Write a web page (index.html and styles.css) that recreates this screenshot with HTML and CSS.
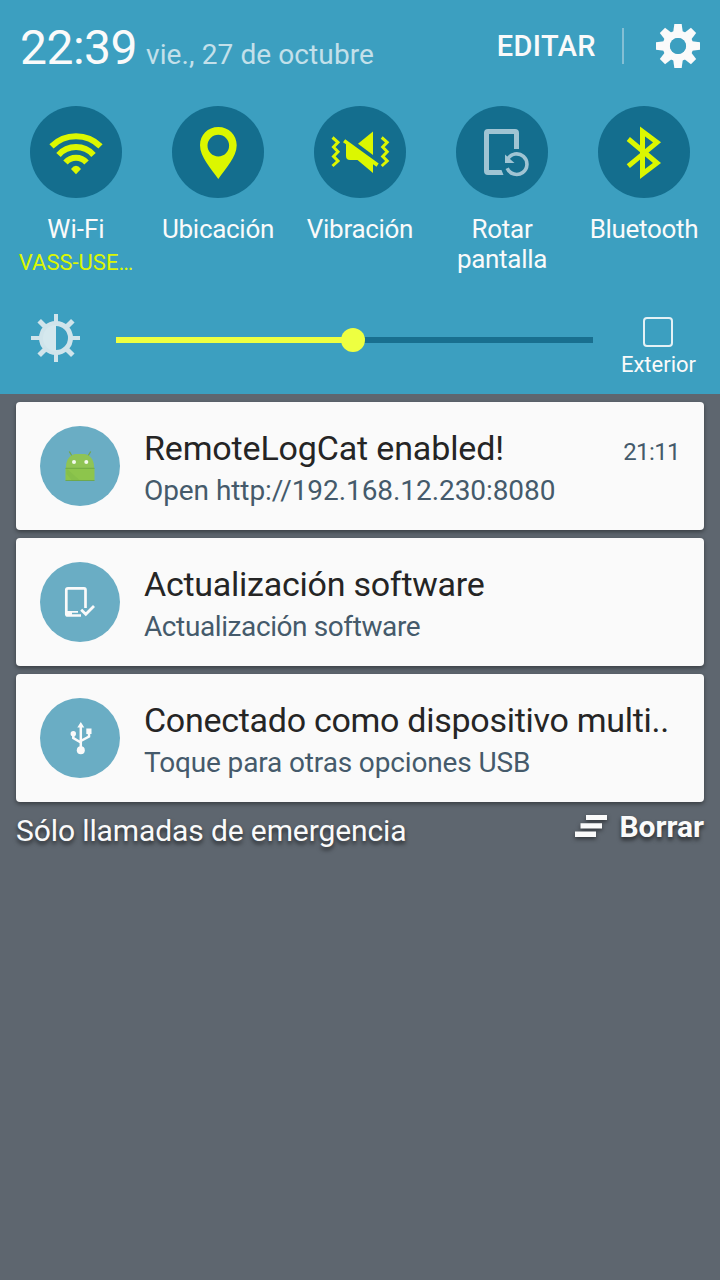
FILE: index.html
```html
<!DOCTYPE html>
<html lang="es">
<head>
<meta charset="utf-8">
<title>Notificaciones</title>
<link rel="stylesheet" href="styles.css">
</head>
<body>
<section class="panel">
  <header class="header">
    <div class="clock"><span class="time">22:39</span><span class="date">vie., 27 de octubre</span></div>
    <span class="edit">EDITAR</span>
    <span class="divider"></span>
    <svg class="gear" width="44" height="44" viewBox="-22 -22 44 44">
      <g fill="#fafafa">
        <path id="tooth" d="M-3.7-22H3.7L5-12H-5Z"/>
        <use href="#tooth" transform="rotate(45)"/><use href="#tooth" transform="rotate(90)"/><use href="#tooth" transform="rotate(135)"/><use href="#tooth" transform="rotate(180)"/><use href="#tooth" transform="rotate(225)"/><use href="#tooth" transform="rotate(270)"/><use href="#tooth" transform="rotate(315)"/>
      </g>
      <circle r="11.6" fill="none" stroke="#fafafa" stroke-width="7.4"/>
      <circle r="8.1" fill="#3c9fc0"/>
    </svg>
  </header>

  <div class="tiles">
    <div class="tile">
      <svg class="disc" viewBox="0 0 92 92">
        <g fill="none" stroke="#dcf700" stroke-width="6">
          <path d="M21.500 40.300A34.800 34.800 0 0 1 70.500 40.300"/>
          <path d="M28.500 48.900A23.500 23.500 0 0 1 63.500 48.900"/>
          <path d="M35.500 56.500A14 14 0 0 1 56.500 56.500"/>
        </g>
        <path d="M41 63Q46 56.500 51 63L46 68.300Z" fill="#dcf700"/>
      </svg>
      <span class="label">Wi-Fi</span>
      <span class="network">VASS-USE…</span>
    </div>
    <div class="tile">
      <svg class="disc" viewBox="0 0 92 92">
        <path fill="#dcf700" fill-rule="evenodd" d="M46.3 21C35.8 21 28 29 28 39.3C28 51 39 62.500 46.300 73C53.600 62.500 64.700 51 64.700 39.300C64.700 29 56.800 21 46.300 21ZM46.300 28.800A10.800 10.800 0 1 1 46.300 50.400A10.800 10.800 0 1 1 46.300 28.800Z"/>
      </svg>
      <span class="label tight">Ubicación</span>
    </div>
    <div class="tile">
      <svg class="disc" viewBox="0 0 92 92">
        <g fill="#dcf700">
          <path d="M44 37.800L59 25.500V49Z"/>
          <path d="M29 36.200L31.200 33.300L64.700 57.500L62.500 60.700L59 58.200V67L43.500 54H36Q32 54 32 50V38.300Z"/>
        </g>
        <g fill="none" stroke="#dcf700" stroke-width="3">
          <path d="M18.500 31.500L24 36.300L19.500 41L24 45.700L19.500 50.400L24 55L18.500 60"/>
          <path d="M67.700 31.500L73.200 36.300L68.700 41L73.200 45.700L68.700 50.400L73.200 55L67.700 60"/>
        </g>
      </svg>
      <span class="label tight">Vibración</span>
    </div>
    <div class="tile">
      <svg class="disc" viewBox="0 0 92 92">
        <path fill="#a0c4d3" d="M32 23H59Q63 23 63 27V43H58V28H33V64H45.500L47.500 69H32Q28 69 28 65V27Q28 23 32 23Z"/>
        <path fill="none" stroke="#a0c4d3" stroke-width="3.6" d="M51.600 53.200A10.300 10.300 0 1 1 51.200 62.300"/>
        <path fill="#a0c4d3" d="M49 48.500L58.500 57H49Z"/>
      </svg>
      <span class="label tight">Rotar pantalla</span>
    </div>
    <div class="tile">
      <svg class="disc" viewBox="0 0 92 92">
        <path fill="none" stroke="#dcf700" stroke-width="5" d="M30.300 33L59 57L44.500 68V25.500L59 36.300L30.300 60.200"/>
      </svg>
      <span class="label tight">Bluetooth</span>
    </div>
  </div>

  <div class="brightness">
    <svg class="sun" width="50" height="50" viewBox="-25 -25 50 50">
      <g stroke="#d0e4eb" stroke-width="4"><path d="M0-24V-15M0 15V24M-25 0H-15M15 0H24"/><path stroke-width="5" d="M-16.800-17.300L-10.500-11M10.500-11L16.800-17.300M-16.800 17.300L-10.500 11M10.500 11L16.800 17.300"/></g>
      <circle r="14.500" fill="none" stroke="#d0e4eb" stroke-width="5"/>
      <path d="M0-13A13 13 0 0 0 0 13Z" fill="#d5e8ee"/>
    </svg>
    <div class="slider"><div class="fill"></div><div class="knob"></div></div>
    <div class="outdoor"><span class="box"></span><span class="caption">Exterior</span></div>
  </div>
</section>

<main class="list">
  <article class="card">
    <svg class="badge" viewBox="0 0 80 80">
      <path d="M29.300 25.500L32 30M50.700 25.500L48 30" stroke="#75a64a" stroke-width="1.300"/>
      <path d="M26 42.500V40.500C26 33 31 28 36 28H44C49 28 54 33 54 40.500V42.500Z" fill="#8fc455"/>
      <path d="M25.500 42H54.500V54.500H25.500Z" fill="#8dc54c"/>
      <path d="M26.500 42.500L40 54.500H32L26.500 48Z" fill="#86bf4a"/>
      <path d="M25.500 42.300H54.500M25.500 54.500H54.500" stroke="#6aa343" stroke-width=".8"/>
      <circle cx="34" cy="36" r="2" fill="#f4faee"/><circle cx="46.300" cy="36" r="2" fill="#f4faee"/>
    </svg>
    <div class="text">
      <div class="row"><h2 class="title t1">RemoteLogCat enabled!</h2><time class="when">21:11</time></div>
      <p class="sub s1">Open http://192.168.12.230:8080</p>
    </div>
  </article>
  <article class="card">
    <svg class="badge" viewBox="0 0 80 80">
      <path fill="none" stroke="#fafafa" stroke-width="2.700" d="M41 53.500H28Q26.300 53.500 26.300 52V28Q26.300 26.300 28 26.300H44Q45.500 26.300 45.500 28V46"/>
      <path d="M26 49H38V50.800H32V53.500H26Z" fill="#fafafa"/>
      <path d="M41.200 47.700L45.800 52.200L54 44" fill="none" stroke="#fafafa" stroke-width="2.800"/>
    </svg>
    <div class="text">
      <div class="row"><h2 class="title t2">Actualización software</h2></div>
      <p class="sub s2">Actualización software</p>
    </div>
  </article>
  <article class="card">
    <svg class="badge" viewBox="0 0 80 80">
      <path fill="none" stroke="#fafafa" stroke-width="2.500" d="M40.800 52V27M33.300 36V40L40.800 44.500M49 34V38.500L40.800 43"/>
      <circle cx="40.800" cy="52.300" r="4" fill="#fafafa"/><circle cx="33.300" cy="35.700" r="2.700" fill="#fafafa"/>
      <path d="M37.300 29.500L40.800 24L44.300 29.500ZM46.300 30.500H51.500V36H46.300Z" fill="#fafafa"/>
    </svg>
    <div class="text">
      <div class="row"><h2 class="title t3">Conectado como dispositivo multi..</h2></div>
      <p class="sub s3">Toque para otras opciones USB</p>
    </div>
  </article>
</main>

<footer class="footer">
  <span class="carrier">Sólo llamadas de emergencia</span>
  <button class="clear">
    <svg class="lines" width="32" height="22" viewBox="0 0 32 22"><path fill="#fafafa" d="M11 0H32V5H11ZM5.500 8.200H27V13.500H5.500ZM0 16.500H21V22H0Z"/></svg>
    <span class="clear-label">Borrar</span>
  </button>
</footer>
</body>
</html>
```
FILE: styles.css
```css
* { box-sizing: border-box; margin: 0; padding: 0; }
body { width: 720px; height: 1280px; overflow: hidden; background: #5e666f; font-family: Roboto, sans-serif; color: #fafafa; }
span, h2, p, time { white-space: nowrap; }
svg { flex: none; }

.panel { height: 394px; background: #3c9fc0; display: flex; flex-direction: column; }
.header { height: 106px; padding: 24px 20px 0; display: flex; align-items: flex-start; }
.clock { flex: 1; display: flex; align-items: baseline; gap: 9px; }
.time { font-size: 48px; line-height: 48px; letter-spacing: -.5px; }
.date { font-size: 28px; line-height: 28px; letter-spacing: .1px; color: #c3e0ea; }
.edit { font-size: 29px; line-height: 44px; font-weight: 500; letter-spacing: .4px; }
.divider { width: 2px; height: 36px; margin: 4px 32px 0 26px; background: #84bfd4; }

.tiles { display: grid; grid-template-columns: repeat(5, 142px); justify-content: center; height: 208px; }
.tile { display: flex; flex-direction: column; align-items: center; }
.disc { width: 92px; height: 92px; border-radius: 50%; background: #146e8e; margin-bottom: 16px; }
.label { font-size: 26px; line-height: 30px; width: 120px; display: flex; justify-content: center; text-align: center; white-space: normal; }
.tight { letter-spacing: -.3px; }
.network { font-size: 22px; line-height: 30px; margin-top: 4px; color: #dcf700; }

.brightness { display: flex; align-items: flex-start; padding-left: 31px; }
.sun { margin-top: -1px; }
.slider { position: relative; flex: none; width: 477px; height: 6px; margin: 23px 0 0 35px; background: #196f8f; }
.fill { width: 237px; height: 6px; background: #eeff41; }
.knob { position: absolute; left: 225px; top: -9px; width: 24px; height: 24px; border-radius: 50%; background: #eeff41; }
.outdoor { flex: none; width: 131px; padding-top: 3px; display: flex; flex-direction: column; align-items: center; }
.box { width: 30px; height: 30px; margin-right: 1px; border: 2px solid #e4f1f5; border-radius: 4px; }
.caption { font-size: 22px; line-height: 26px; margin-top: 5px; }

.list { padding: 8px 16px 0; display: flex; flex-direction: column; gap: 8px; }
.card { height: 128px; padding: 24px; display: flex; gap: 24px; background: #fafafa; border-radius: 4px; box-shadow: 0 2px 4px rgba(0, 0, 0, .4); }
.badge { width: 80px; height: 80px; border-radius: 50%; background: #6aadc4; }
.text { flex: 1; padding-top: 2px; }
.row { display: flex; align-items: baseline; justify-content: space-between; height: 40px; }
.title { font-size: 34px; line-height: 40px; font-weight: 400; color: #252525; }
.when { font-size: 24px; line-height: 28px; letter-spacing: -.6px; color: #455a6b; }
.sub { font-size: 28px; line-height: 36px; margin-top: 5px; color: #455a6b; }
.t1 { letter-spacing: -.15px; }
.t2 { letter-spacing: -.25px; }
.t3 { letter-spacing: -.28px; }
.s1 { letter-spacing: -.07px; }
.s2 { letter-spacing: -.4px; }
.s3 { letter-spacing: -.14px; }

.footer { display: flex; justify-content: space-between; padding: 11px 16px 0; }
.carrier { font-size: 30px; line-height: 36px; letter-spacing: -.11px; text-shadow: 0 3px 4px rgba(0, 0, 0, .6); }
.clear { display: flex; height: 36px; border: 0; background: none; color: inherit; font: inherit; gap: 12px; margin-top: -4px; }
.lines { margin-top: 6px; filter: drop-shadow(0 2px 2px rgba(0, 0, 0, .5)); }
.clear-label { font-size: 30px; line-height: 36px; font-weight: 700; text-shadow: 0 3px 4px rgba(0, 0, 0, .6); }
```
